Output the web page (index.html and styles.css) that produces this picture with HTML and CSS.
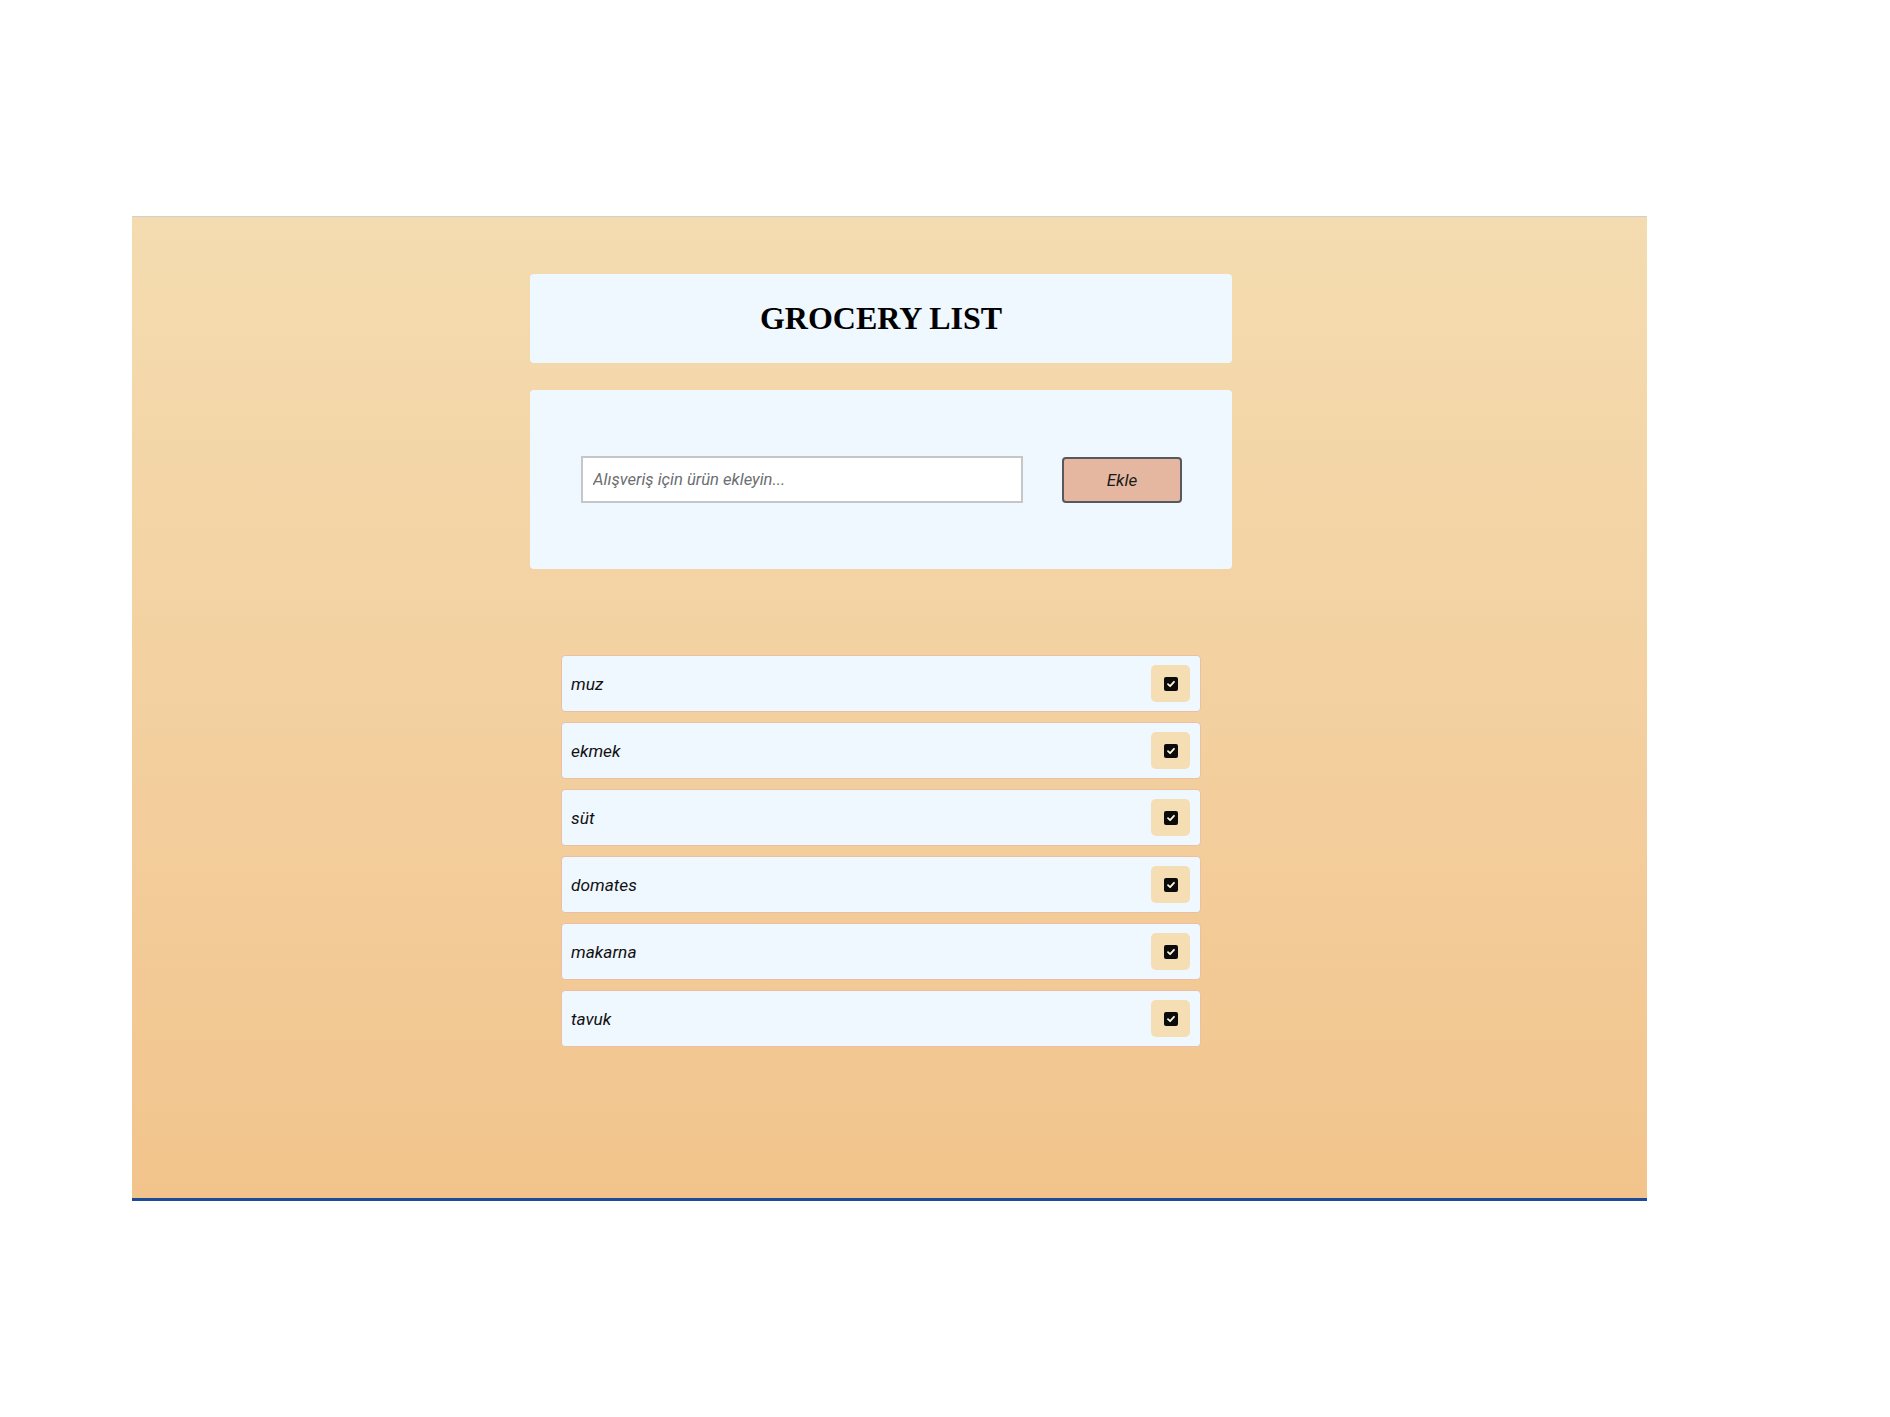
FILE: index.html
```html
<!DOCTYPE html>
<html lang="tr">
<head>
<meta charset="utf-8">
<title>Grocery List</title>
<link rel="stylesheet" href="styles.css">
</head>
<body>
  <main class="stage">
    <div class="column">
      <header class="card title-card">
        <h1 class="title">GROCERY LIST</h1>
      </header>
      <section class="card form-card">
        <input class="item-input" type="text" placeholder="Alışveriş için ürün ekleyin...">
        <button class="add-btn" type="button">Ekle</button>
      </section>
      <ul class="list">
        <li class="item"><span class="item-name">muz</span><span class="check-wrap"><span class="check"><svg viewBox="0 0 10 10" width="10" height="10"><path d="M2 5.2 L4.1 7.2 L8 2.8" fill="none" stroke="#fff6dc" stroke-width="1.8" stroke-linecap="round" stroke-linejoin="round"/></svg></span></span></li>
        <li class="item"><span class="item-name">ekmek</span><span class="check-wrap"><span class="check"><svg viewBox="0 0 10 10" width="10" height="10"><path d="M2 5.2 L4.1 7.2 L8 2.8" fill="none" stroke="#fff6dc" stroke-width="1.8" stroke-linecap="round" stroke-linejoin="round"/></svg></span></span></li>
        <li class="item"><span class="item-name">süt</span><span class="check-wrap"><span class="check"><svg viewBox="0 0 10 10" width="10" height="10"><path d="M2 5.2 L4.1 7.2 L8 2.8" fill="none" stroke="#fff6dc" stroke-width="1.8" stroke-linecap="round" stroke-linejoin="round"/></svg></span></span></li>
        <li class="item"><span class="item-name">domates</span><span class="check-wrap"><span class="check"><svg viewBox="0 0 10 10" width="10" height="10"><path d="M2 5.2 L4.1 7.2 L8 2.8" fill="none" stroke="#fff6dc" stroke-width="1.8" stroke-linecap="round" stroke-linejoin="round"/></svg></span></span></li>
        <li class="item"><span class="item-name">makarna</span><span class="check-wrap"><span class="check"><svg viewBox="0 0 10 10" width="10" height="10"><path d="M2 5.2 L4.1 7.2 L8 2.8" fill="none" stroke="#fff6dc" stroke-width="1.8" stroke-linecap="round" stroke-linejoin="round"/></svg></span></span></li>
        <li class="item"><span class="item-name">tavuk</span><span class="check-wrap"><span class="check"><svg viewBox="0 0 10 10" width="10" height="10"><path d="M2 5.2 L4.1 7.2 L8 2.8" fill="none" stroke="#fff6dc" stroke-width="1.8" stroke-linecap="round" stroke-linejoin="round"/></svg></span></span></li>
      </ul>
    </div>
  </main>
</body>
</html>
```

FILE: styles.css
```css
html, body {
  margin: 0;
  padding: 0;
  background: #ffffff;
}

body {
  padding-top: 216px;
  padding-left: 132px;
  font-family: Roboto, "Liberation Sans", sans-serif;
}

.stage {
  box-sizing: border-box;
  width: 1515px;
  height: 985px;
  border-top: 1px solid #cfd0d2;
  border-bottom: 3px solid #1c4b97;
  background: linear-gradient(to bottom, #f4dcb0 0%, #f3cf9e 55%, #f2c48c 100%);
  padding-top: 57px;
}

.column {
  width: 702px;
  margin-left: 398px;
  display: flex;
  flex-direction: column;
}

.card {
  background: #eff7ff;
  border-radius: 4px;
}

.title-card {
  height: 89px;
  display: flex;
  align-items: center;
  justify-content: center;
}

.title {
  margin: 0;
  font-family: "Liberation Serif", "Times New Roman", serif;
  font-weight: bold;
  font-size: 32px;
  color: #000;
}

.form-card {
  margin-top: 27px;
  height: 179px;
  box-sizing: border-box;
  padding: 0 50px 0 51px;
  display: flex;
  align-items: center;
  gap: 39px;
}

.item-input {
  box-sizing: border-box;
  width: 442px;
  height: 47px;
  border: 2px solid #c4c6c8;
  border-radius: 0;
  background: #ffffff;
  padding: 0 10px;
  font-family: Roboto, "Liberation Sans", sans-serif;
  font-style: italic;
  font-size: 16.6px;
  color: #333;
  outline: none;
}

.item-input::placeholder {
  color: #6c6e72;
  font-style: italic;
}

.add-btn {
  box-sizing: border-box;
  width: 120px;
  height: 46px;
  border: 2px solid #55585c;
  border-radius: 4px;
  background: #e5b7a0;
  font-family: Roboto, "Liberation Sans", sans-serif;
  font-style: italic;
  font-size: 17px;
  color: #1a1a1a;
  padding: 0;
}

.list {
  list-style: none;
  margin: 86px auto 0;
  padding: 0;
  width: 640px;
  display: flex;
  flex-direction: column;
  gap: 10px;
}

.item {
  box-sizing: border-box;
  height: 57px;
  background: #eff7ff;
  border: 1px solid #ebbfa3;
  border-radius: 4px;
  padding: 0 10px 0 9px;
  display: flex;
  align-items: center;
  justify-content: space-between;
}

.item-name {
  font-style: italic;
  font-size: 17.3px;
  color: #111;
}

.check-wrap {
  width: 39px;
  height: 37px;
  background: #f5deb3;
  border-radius: 5px;
  display: flex;
  align-items: center;
  justify-content: center;
}

.check {
  width: 14px;
  height: 14px;
  background: #0b0b0b;
  border-radius: 2px;
  display: flex;
  align-items: center;
  justify-content: center;
}

.check svg {
  display: block;
}
```
